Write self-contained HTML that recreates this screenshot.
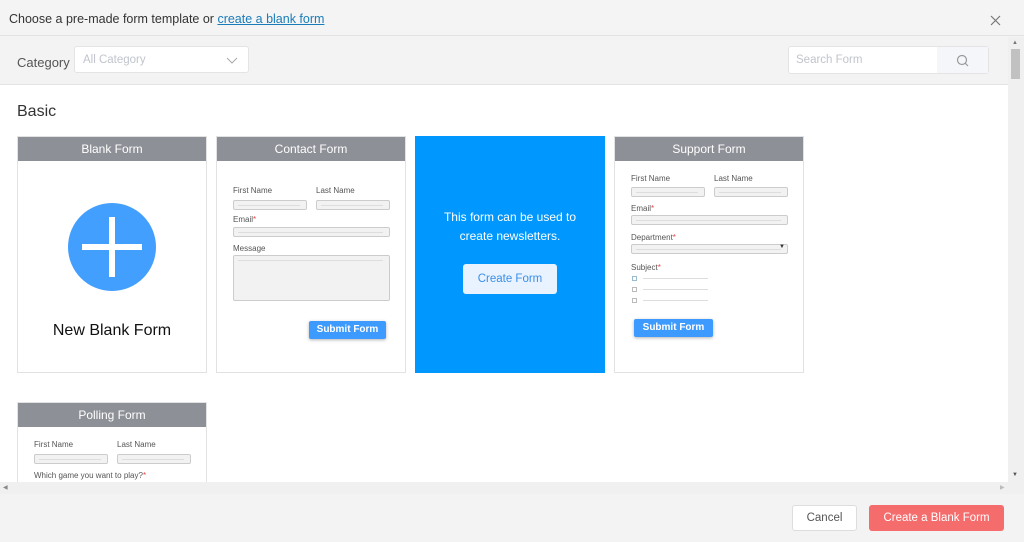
<!DOCTYPE html>
<html><head><meta charset="utf-8"><style>
*{box-sizing:border-box;margin:0;padding:0}
body{width:1024px;height:542px;overflow:hidden;background:#f3f3f3;font-family:"Liberation Sans",sans-serif;position:relative;color:#333}
.a{position:absolute}
.card{position:absolute;width:190px;background:#fff;border:1px solid #e2e2e2}
.ch{height:24px;background:#8e9097;color:#fff;font-size:12px;text-align:center;line-height:24px}
.lb{position:absolute;font-size:8px;color:#555}
.in{position:absolute;height:10px;border:1px solid #ccc;border-radius:2px;background:#f2f2f2}
.in:after{content:"";position:absolute;left:4px;right:6px;top:4px;height:1px;background:#ddd}
.btn{position:absolute;background:#3d9bff;color:#fff;font-size:10px;font-weight:bold;text-align:center;border-radius:2px;box-shadow:0 1px 3px rgba(0,0,0,.3)}
.r{color:#e44}
</style></head><body>
<div class="a" style="left:0;top:0;width:1024px;height:36px;background:#f4f4f4;border-bottom:1px solid #e3e3e3"></div>
<div class="a" style="left:9px;top:12px;font-size:12.5px;color:#333">Choose a pre-made form template or <span style="color:#1a7cb8;text-decoration:underline">create a blank form</span></div>
<svg class="a" style="left:990px;top:15px" width="11" height="11"><path d="M1 1L10 10M10 1L1 10" stroke="#777" stroke-width="1.2"/></svg>
<div class="a" style="left:17px;top:55px;font-size:13px;color:#555">Category</div>
<div class="a" style="left:74px;top:46px;width:175px;height:27px;background:#fff;border:1px solid #e4e4e4;border-radius:3px"></div>
<div class="a" style="left:83px;top:54px;font-size:11.5px;color:#c0c4cc">All Category</div>
<svg class="a" style="left:226px;top:57px" width="12" height="7"><path d="M1 1L6 6L11 1" stroke="#aaa" fill="none"/></svg>
<div class="a" style="left:788px;top:46px;width:201px;height:28px;background:#fff;border:1px solid #e4e4e4;border-radius:3px"></div>
<div class="a" style="left:937px;top:47px;width:51px;height:26px;background:#f4f6fa"></div>
<div class="a" style="left:796px;top:54px;font-size:11.5px;color:#c0c4cc">Search Form</div>
<svg class="a" style="left:956px;top:54px" width="13" height="13"><circle cx="6" cy="6" r="4.5" stroke="#999" fill="none" stroke-width="1.2"/><path d="M9.2 9.2L12 12" stroke="#999" stroke-width="1.2"/></svg>
<div class="a" style="left:0;top:84px;width:1008px;height:398px;background:#fff;border-top:1px solid #e3e3e3"></div>
<div class="a" style="left:1008px;top:37px;width:16px;height:457px;background:#f0f0f0"></div>
<div class="a" style="left:1011px;top:49px;width:9px;height:30px;background:#c1c1c1"></div>
<div class="a" style="left:1012px;top:40px;font-size:6px;color:#777">▲</div>
<div class="a" style="left:1012px;top:472px;font-size:6px;color:#555">▼</div>
<div class="a" style="left:0;top:482px;width:1008px;height:12px;background:#f0f0f0"></div>
<div class="a" style="left:3px;top:484px;font-size:6px;color:#888">◀</div>
<div class="a" style="left:1000px;top:484px;font-size:6px;color:#bbb">▶</div>
<div class="a" style="left:17px;top:103px;font-size:16px;color:#333">Basic</div>

<div class="card" style="left:17px;top:136px;height:237px"><div class="ch">Blank Form</div>
<div class="a" style="left:50px;top:66px;width:88px;height:88px;border-radius:50%;background:#439ffd"></div>
<div class="a" style="left:64px;top:107px;width:60px;height:6px;background:#fff"></div>
<div class="a" style="left:91px;top:80px;width:6px;height:60px;background:#fff"></div>
<div class="a" style="left:0;width:188px;top:185px;text-align:center;font-size:16px;color:#111">New Blank Form</div></div>

<div class="card" style="left:216px;top:136px;height:237px"><div class="ch">Contact Form</div>
<div class="lb" style="left:16px;top:49px">First Name</div><div class="lb" style="left:99px;top:49px">Last Name</div>
<div class="in" style="left:16px;top:63px;width:74px"></div><div class="in" style="left:99px;top:63px;width:74px"></div>
<div class="lb" style="left:16px;top:78px">Email<span class="r">*</span></div>
<div class="in" style="left:16px;top:90px;width:157px"></div>
<div class="lb" style="left:16px;top:107px">Message</div>
<div class="in" style="left:16px;top:118px;width:157px;height:46px"></div>
<div class="btn" style="left:92px;top:184px;width:77px;height:18px;line-height:18px">Submit Form</div></div>

<div class="a" style="left:415px;top:136px;width:190px;height:237px;background:#0098ff"></div>
<div class="a" style="left:415px;top:208px;width:190px;text-align:center;color:#fff;font-size:12px;line-height:19px">This form can be used to<br>create newsletters.</div>
<div class="a" style="left:463px;top:264px;width:94px;height:30px;background:#e8f3ff;border-radius:3px;color:#3a8ee6;font-size:11.5px;text-align:center;line-height:30px">Create Form</div>

<div class="card" style="left:614px;top:136px;height:237px"><div class="ch">Support Form</div>
<div class="lb" style="left:16px;top:37px">First Name</div><div class="lb" style="left:99px;top:37px">Last Name</div>
<div class="in" style="left:16px;top:50px;width:74px"></div><div class="in" style="left:99px;top:50px;width:74px"></div>
<div class="lb" style="left:16px;top:67px">Email<span class="r">*</span></div>
<div class="in" style="left:16px;top:78px;width:157px"></div>
<div class="lb" style="left:16px;top:96px">Department<span class="r">*</span></div>
<div class="in" style="left:16px;top:107px;width:157px"></div>
<div class="a" style="left:164px;top:107px;font-size:6px">▼</div>
<div class="lb" style="left:16px;top:126px">Subject<span class="r">*</span></div>
<div class="a" style="left:17px;top:139px;width:5px;height:5px;border:1px solid #9bc"></div><div class="a" style="left:28px;top:141px;width:65px;height:1px;background:#ddd"></div>
<div class="a" style="left:17px;top:150px;width:5px;height:5px;border:1px solid #bbb"></div><div class="a" style="left:28px;top:152px;width:65px;height:1px;background:#ddd"></div>
<div class="a" style="left:17px;top:161px;width:5px;height:5px;border:1px solid #bbb"></div><div class="a" style="left:28px;top:163px;width:65px;height:1px;background:#ddd"></div>
<div class="btn" style="left:19px;top:182px;width:79px;height:18px;line-height:18px">Submit Form</div></div>

<div class="card" style="left:17px;top:402px;height:80px;border-bottom:none"><div class="ch">Polling Form</div>
<div class="lb" style="left:16px;top:37px">First Name</div><div class="lb" style="left:99px;top:37px">Last Name</div>
<div class="in" style="left:16px;top:51px;width:74px"></div><div class="in" style="left:99px;top:51px;width:74px"></div>
<div class="lb" style="left:16px;top:68px">Which game you want to play?<span class="r">*</span></div></div>

<div class="a" style="left:792px;top:505px;width:65px;height:26px;background:#fff;border:1px solid #ddd;border-radius:3px;font-size:11.5px;color:#555;text-align:center;line-height:24px">Cancel</div>
<div class="a" style="left:869px;top:505px;width:135px;height:26px;background:#f56c6c;border-radius:3px;font-size:11.5px;color:#fff;text-align:center;line-height:26px">Create a Blank Form</div>
</body></html>
